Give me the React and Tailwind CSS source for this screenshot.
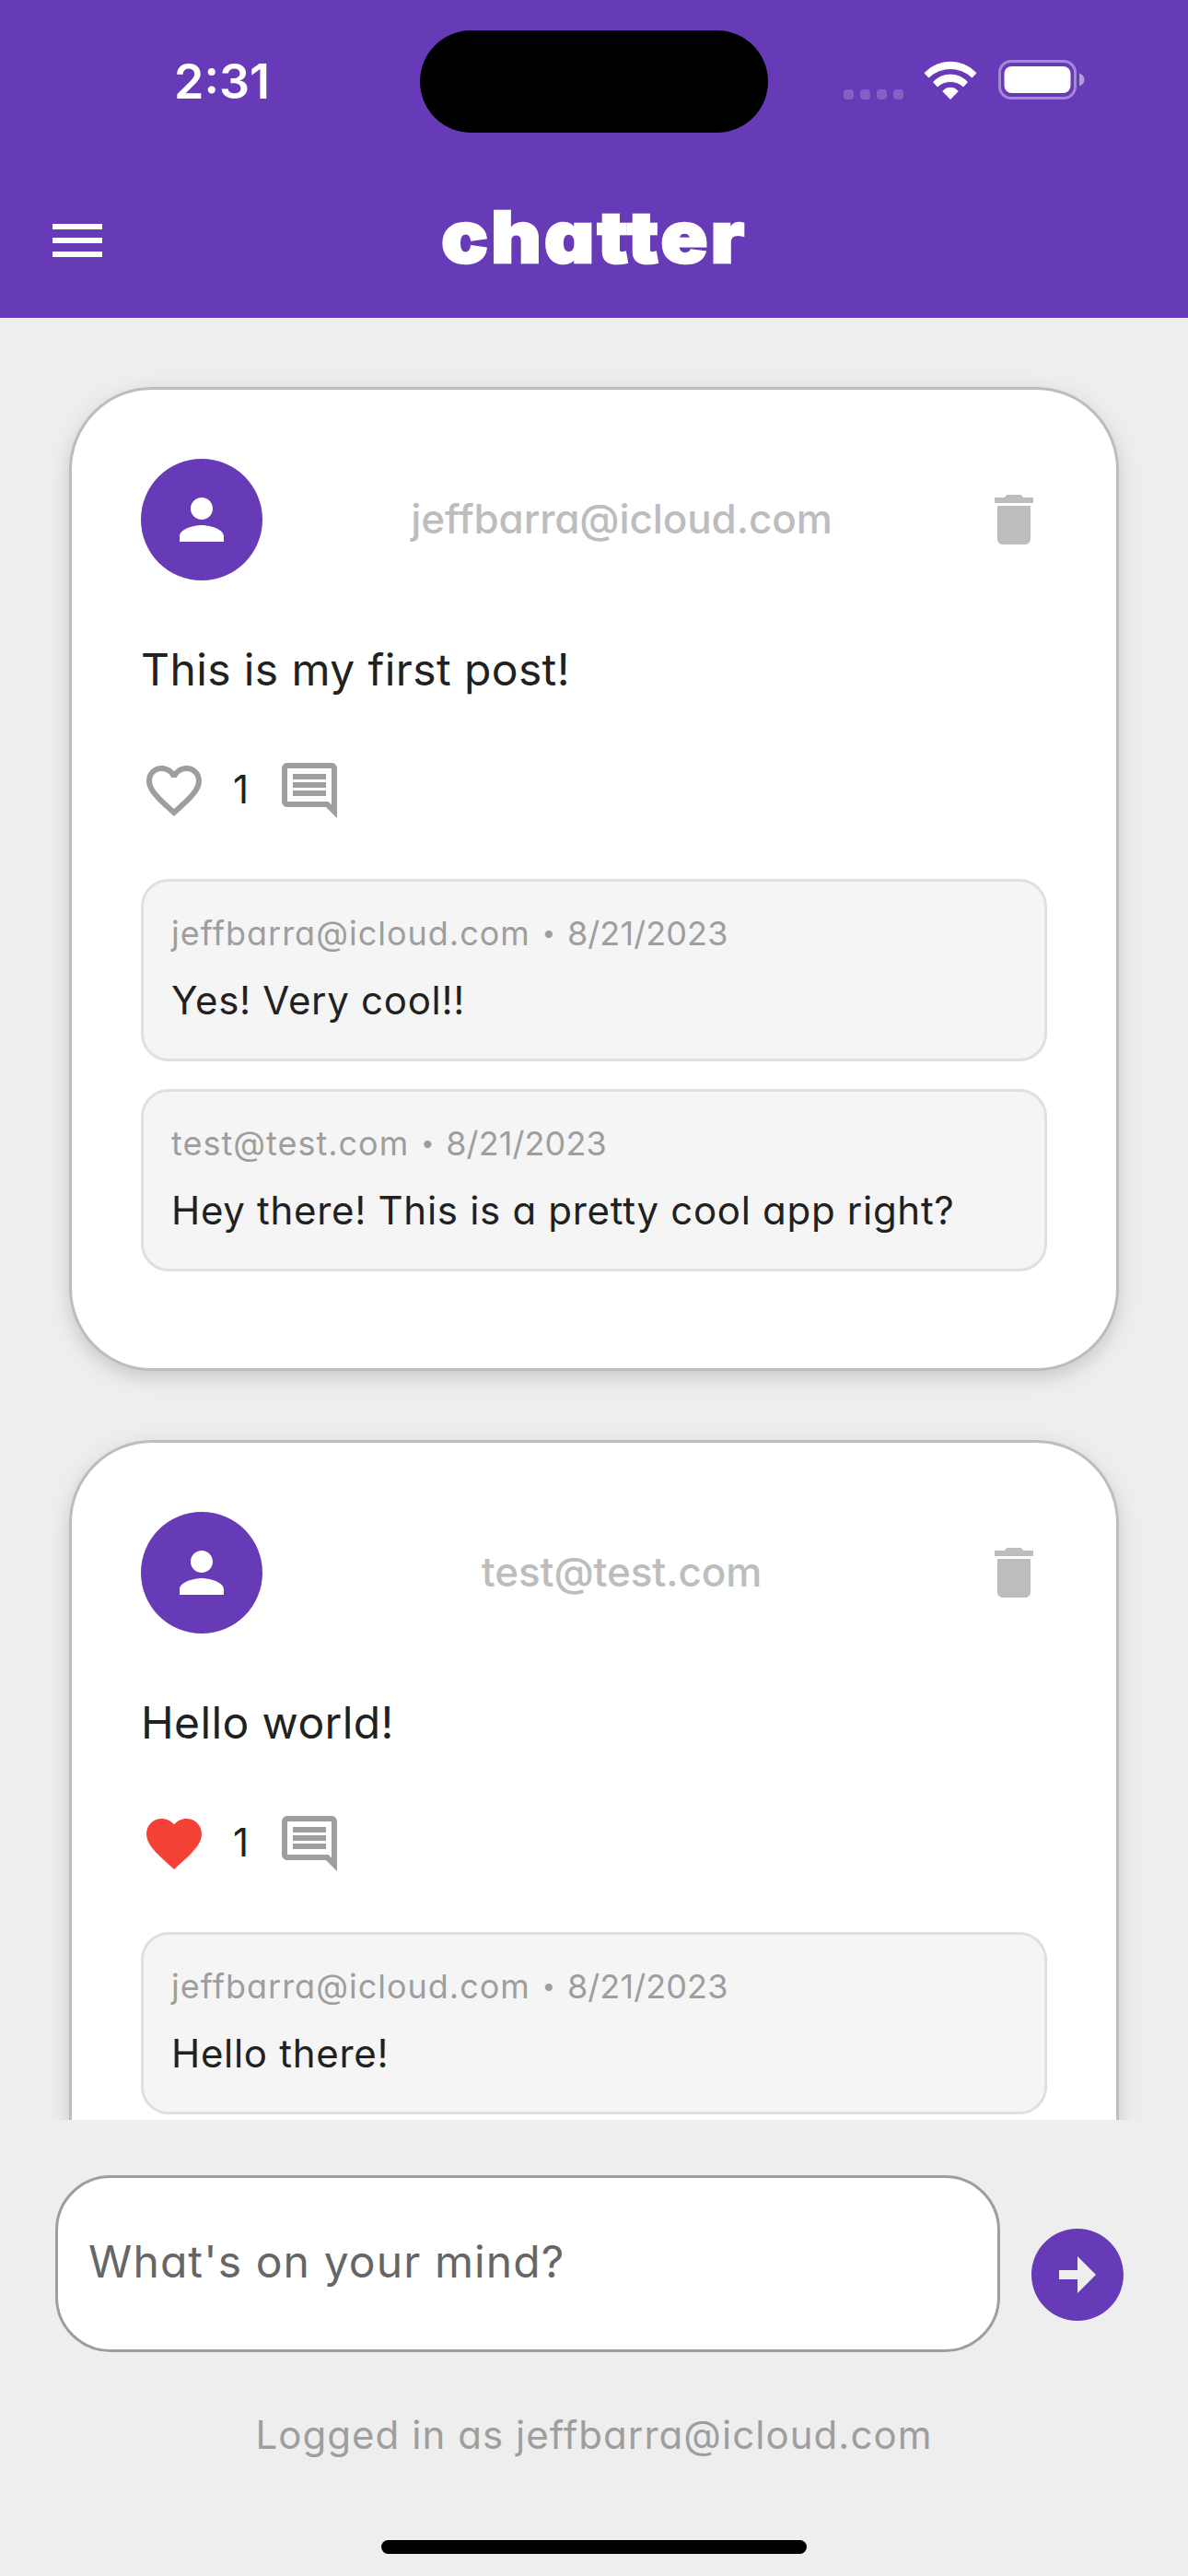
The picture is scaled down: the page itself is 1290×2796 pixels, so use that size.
const posts = [
  {
    author: "jeffbarra@icloud.com",
    text: "This is my first post!",
    liked: false,
    likes: 1,
    comments: [
      { user: "jeffbarra@icloud.com", date: "8/21/2023", text: "Yes! Very cool!!" },
      { user: "test@test.com", date: "8/21/2023", text: "Hey there! This is a pretty cool app right?" },
    ],
  },
  {
    author: "test@test.com",
    text: "Hello world!",
    liked: true,
    likes: 1,
    comments: [{ user: "jeffbarra@icloud.com", date: "8/21/2023", text: "Hello there!" }],
  },
];

const icons = {
  menu: "M3 18h18v-2H3v2zm0-5h18v-2H3v2zm0-7v2h18V6H3z",
  person: "M12 12c2.21 0 4-1.79 4-4s-1.79-4-4-4-4 1.79-4 4 1.79 4 4 4zm0 2c-2.67 0-8 1.34-8 4v2h16v-2c0-2.66-5.33-4-8-4z",
  trash: "M6 19c0 1.1.9 2 2 2h8c1.1 0 2-.9 2-2V7H6v12zM19 4h-3.5l-1-1h-5l-1 1H5v2h14V4z",
  heart: "M12 21.35l-1.45-1.32C5.4 15.36 2 12.28 2 8.5 2 5.42 4.42 3 7.5 3c1.74 0 3.41.81 4.5 2.09C13.09 3.81 14.76 3 16.5 3 19.58 3 22 5.42 22 8.5c0 3.78-3.4 6.86-8.55 11.54L12 21.35z",
  heartOutline: "M16.5 3c-1.74 0-3.41.81-4.5 2.09C10.91 3.81 9.24 3 7.5 3 4.42 3 2 5.42 2 8.5c0 3.78 3.4 6.86 8.55 11.54L12 21.35l1.45-1.32C18.6 15.36 22 12.28 22 8.5 22 5.42 19.58 3 16.5 3zm-4.4 15.55l-.1.1-.1-.1C7.14 14.24 4 11.39 4 8.5 4 6.5 5.5 5 7.5 5c1.54 0 3.04.99 3.57 2.36h1.87C13.46 5.99 14.96 5 16.5 5c2 0 3.5 1.5 3.5 3.5 0 2.89-3.14 5.74-7.9 10.05z",
  comment: "M21.99 4c0-1.1-.89-2-1.99-2H4c-1.1 0-2 .9-2 2v12c0 1.1.9 2 2 2h14l4 4-.01-18zM20 4v13.17L18.83 16H4V4h16zM6 12h12v2H6zm0-3h12v2H6zm0-3h12v2H6z",
  send: "M22 12c0-5.52-4.48-10-10-10S2 6.48 2 12s4.48 10 10 10 10-4.48 10-10zM12 13H8v-2h4V8l4 4-4 4v-3z",
};

function Icon({ name, className }) {
  return (
    <svg viewBox="0 0 24 24" fill="currentColor" fillRule="evenodd" className={className}>
      <path d={icons[name]} />
    </svg>
  );
}

function StatusBar() {
  return (
    <div className="flex h-[177px] pt-[33px]">
      <div className="flex h-[111px] w-[456px] items-center pl-[189px] text-[52px] leading-none font-semibold [font-feature-settings:normal]">
        2:31
      </div>
      <div className="h-[111px] w-[378px] rounded-full bg-black" />
      <div className="flex h-[107px] items-center pl-[82px]">
        <div className="flex h-[42px] items-end gap-[7px]">
          <span className="h-[11px] w-[11px] rounded-[4px] bg-white/20" />
          <span className="h-[11px] w-[11px] rounded-[4px] bg-white/20" />
          <span className="h-[11px] w-[11px] rounded-[4px] bg-white/20" />
          <span className="h-[11px] w-[11px] rounded-[4px] bg-white/20" />
        </div>
        <svg viewBox="0 0 58 42" fill="white" stroke="white" strokeWidth="1" strokeLinejoin="round" className="ml-[22px] h-[42px] w-[58px]">
          <path d="M1 13.3A38.5 38.5 0 0 1 57 13.3L52.5 18A33.8 33.8 0 0 0 5.5 18Z" />
          <path d="M10.5 23A25.5 25.5 0 0 1 47.5 23L43 28A20.6 20.6 0 0 0 15 28Z" />
          <path d="M20.7 33A11 11 0 0 1 37.3 33L29 41.5Z" />
        </svg>
        <svg viewBox="0 0 95 43" className="ml-[23px] h-[43px] w-[95px]">
          <rect x="1.5" y="1.5" width="82" height="40" rx="12.5" fill="none" stroke="white" strokeOpacity="0.4" strokeWidth="3" />
          <rect x="6.5" y="7" width="72" height="29" rx="8" fill="white" />
          <path d="M88 14.5C91.6 15.8 93.5 18.3 93.5 21.5S91.6 27.2 88 28.5Z" fill="white" fillOpacity="0.5" />
        </svg>
      </div>
    </div>
  );
}

function Header() {
  return (
    <header className="h-[345px] shrink-0 bg-[#673ab7] text-white">
      <StatusBar />
      <div className="flex h-[168px] items-center justify-between px-12">
        <Icon name="menu" className="h-[72px] w-[72px]" />
        <h1 className="scale-x-[1.09] pb-2 text-[77px] leading-none font-black tracking-[3px] [-webkit-text-stroke:2.5px_white]">
          chatter
        </h1>
        <div className="w-[72px]" />
      </div>
    </header>
  );
}

function Comment({ user, date, text }) {
  return (
    <div className="rounded-[30px] border-[3px] border-[#e0e0e0] bg-[#f5f5f5] pt-[29px] pb-8 pl-[30px]">
      <p className="mb-[14px] flex text-[36px] leading-[54px] text-[#9e9e9e]">
        <span className="tracking-[1px]">{user}</span>
        <span className="w-10 text-center text-[26px]">•</span>
        <span className="tracking-[0.1px]">{date}</span>
      </p>
      <p className="text-[42px] leading-[63px] tracking-[0.7px]">{text}</p>
    </div>
  );
}

function Post({ post }) {
  return (
    <article className="shrink-0 rounded-[90px] border-[3px] border-[#bdbdbd] bg-white p-[75px] pb-[105px] shadow-[0_9px_15px_rgba(0,0,0,0.06),0_6px_27px_rgba(0,0,0,0.1)]">
      <div className="flex items-center justify-between">
        <div className="flex h-[132px] w-[132px] items-center justify-center rounded-full bg-[#673ab7]">
          <Icon name="person" className="h-[72px] w-[72px] text-white" />
        </div>
        <p className="pb-[3px] text-[44px] leading-[66px] font-medium tracking-[-0.1px] text-[#bdbdbd]">{post.author}</p>
        <Icon name="trash" className="h-[72px] w-[72px] text-[#bdbdbd]" />
      </div>
      <p className="mt-[60px] text-[48px] leading-[73px] tracking-[0.4px]">{post.text}</p>
      <div className="mt-[59px] flex items-center">
        {post.liked ? (
          <Icon name="heart" className="h-[72px] w-[72px] text-[#f44336]" />
        ) : (
          <Icon name="heartOutline" className="h-[72px] w-[72px] text-[#9e9e9e]" />
        )}
        <span className="w-[75px] pr-[2px] pb-[3px] text-center text-[42px] leading-[63px]">{post.likes}</span>
        <Icon name="comment" className="h-[72px] w-[72px] text-[#9e9e9e]" />
      </div>
      <div className="mt-[60px] flex flex-col gap-[30px]">
        {post.comments.map((c) => (
          <Comment key={c.text} user={c.user} date={c.date} text={c.text} />
        ))}
      </div>
    </article>
  );
}

function Composer() {
  return (
    <footer className="flex flex-1 flex-col items-center pt-[60px]">
      <div className="flex w-full items-end gap-6 px-[60px]">
        <div className="flex h-[192px] flex-1 items-center rounded-[60px] border-[3px] border-[#9e9e9e] bg-white pb-[5px] pl-[33px] text-[48px] tracking-[1.1px] text-[#666666]">
          What's on your mind?
        </div>
        <Icon name="send" className="mb-6 h-[120px] w-[120px] text-[#673ab7]" />
      </div>
      <p className="mt-[58px] text-[42px] leading-[64px] tracking-[1.05px] text-[#9e9e9e]">Logged in as jeffbarra@icloud.com</p>
      <div className="mt-[82px] h-[15px] w-[462px] rounded-full bg-black" />
    </footer>
  );
}

export default function App() {
  return (
    <div className="flex h-[2796px] w-[1290px] flex-col overflow-hidden bg-[#eeeeee] font-['Inter','Liberation_Sans',sans-serif] text-[#212121] [font-feature-settings:'cv11','calt'_0]">
      <Header />
      <main className="flex h-[1956px] shrink-0 flex-col gap-[75px] overflow-hidden px-[75px] pt-[75px]">
        {posts.map((p) => (
          <Post key={p.author} post={p} />
        ))}
      </main>
      <Composer />
    </div>
  );
}
